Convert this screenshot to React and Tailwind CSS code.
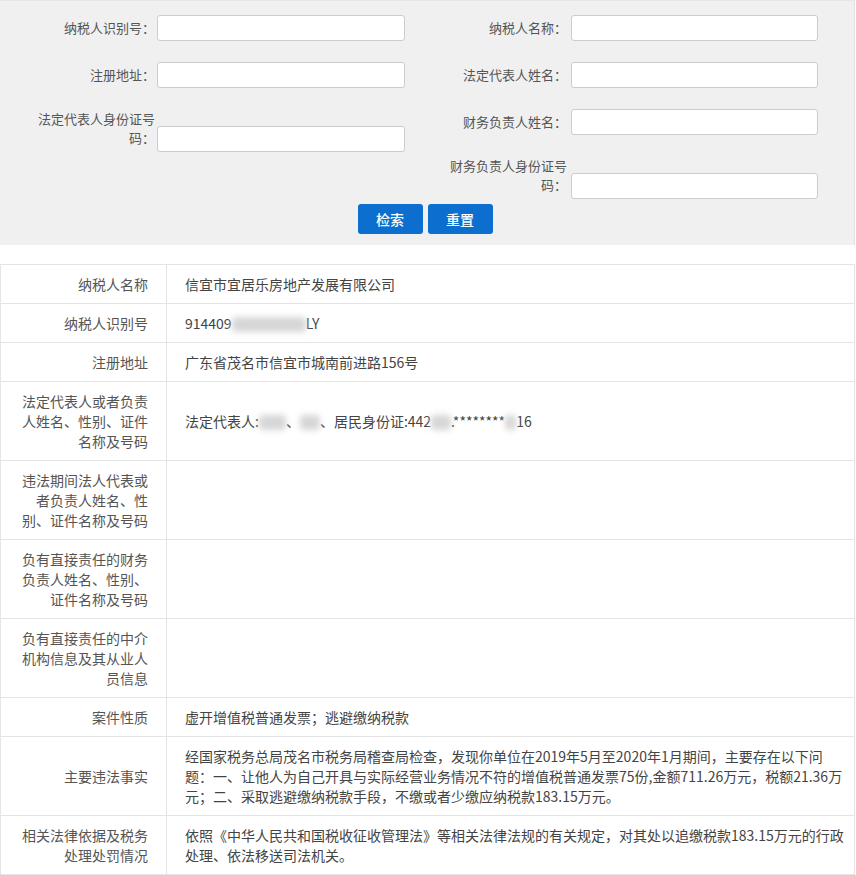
import React from 'react';

const FONT = { fontFamily: '"Noto Sans CJK SC", "Noto Sans", sans-serif' };

const LEFT_FIELDS = [
  { label: '纳税人识别号：' },
  { label: '注册地址：' },
  { label: '法定代表人身份证号码：', wrap: true },
];

const RIGHT_FIELDS = [
  { label: '纳税人名称：' },
  { label: '法定代表人姓名：' },
  { label: '财务负责人姓名：' },
  { label: '财务负责人身份证号码：', wrap: true },
];

function Field({ label, wrap, side }) {
  const labelPos = side === 'left' ? 'ml-[33px]' : 'ml-[17px]';
  const inputPos = side === 'left' ? 'ml-[2px] w-[248px]' : 'ml-[4px] w-[247px]';
  return (
    <div className={wrap ? 'flex items-start' : 'flex items-center h-[26px]'}>
      <label className={`${labelPos} w-[122px] shrink-0 text-right text-[13px] text-[#555] ${wrap ? 'leading-[19px]' : 'leading-[26px]'}`}>
        {label}
      </label>
      <input
        type="text"
        className={`${inputPos} h-[26px] shrink-0 bg-white border border-[#cccccc] rounded-[3px] outline-none ${wrap ? 'mt-[17px]' : ''}`}
      />
    </div>
  );
}

function Blur({ w }) {
  return (
    <span
      className="inline-block align-middle h-[15px] bg-[#d6d6d6] blur-[3px] rounded-sm -mt-[2px]"
      style={{ width: w }}
    />
  );
}

const ROWS = [
  { label: '纳税人名称', value: '信宜市宜居乐房地产发展有限公司' },
  {
    label: '纳税人识别号',
    value: (
      <>
        914409<Blur w={74} />LY
      </>
    ),
  },
  { label: '注册地址', value: '广东省茂名市信宜市城南前进路156号' },
  {
    label: '法定代表人或者负责人姓名、性别、证件名称及号码',
    value: (
      <>
        法定代表人:<Blur w={27} />、<Blur w={20} />、居民身份证:442<Blur w={20} />.********<Blur w={11} />16
      </>
    ),
  },
  { label: '违法期间法人代表或者负责人姓名、性别、证件名称及号码', value: '' },
  { label: '负有直接责任的财务负责人姓名、性别、证件名称及号码', value: '' },
  { label: '负有直接责任的中介机构信息及其从业人员信息', value: '' },
  { label: '案件性质', value: '虚开增值税普通发票；逃避缴纳税款' },
  {
    label: '主要违法事实',
    value: (
      <>
        经国家税务总局茂名市税务局稽查局检查，发现你单位在2019年5月至2020年1月期间，主要存在以下问
        <br />
        题：一、让他人为自己开具与实际经营业务情况不符的增值税普通发票75份,金额711.26万元，税额21.36万
        <br />
        元；二、采取逃避缴纳税款手段，不缴或者少缴应纳税款183.15万元。
      </>
    ),
  },
  {
    label: '相关法律依据及税务处理处罚情况',
    value: (
      <>
        依照《中华人民共和国税收征收管理法》等相关法律法规的有关规定，对其处以追缴税款183.15万元的行政
        <br />
        处理、依法移送司法机关。
      </>
    ),
  },
];

export default function App() {
  return (
    <div className="w-[856px] bg-white" style={FONT}>
      {/* search panel */}
      <div className="bg-[#f0f0f0] border-t border-[#e6e6e6] border-r border-r-[#e2e2e2] w-[855px]">
        <div className="flex pt-[14px]">
          <div className="w-[428px] shrink-0 flex flex-col gap-[21px]">
            {LEFT_FIELDS.map((f) => (
              <Field key={f.label} {...f} side="left" />
            ))}
          </div>
          <div className="flex-1 flex flex-col gap-[21px]">
            {RIGHT_FIELDS.map((f) => (
              <Field key={f.label} {...f} side="right" />
            ))}
          </div>
        </div>
        <div className="flex justify-center gap-[5px] mt-[5px] pb-[11px] pr-[4px]">
          <button className="w-[65px] h-[30px] rounded-[3px] bg-[#0c6fcf] text-white text-[14px] font-medium">检索</button>
          <button className="w-[65px] h-[30px] rounded-[3px] bg-[#0c6fcf] text-white text-[14px] font-medium">重置</button>
        </div>
      </div>

      {/* result table */}
      <table className="mt-[19px] w-[855px] border-collapse text-[14px] leading-[20px]">
        <tbody>
          {ROWS.map((r) => (
            <tr key={r.label}>
              <td className="w-[166px] border border-[#e4e4e4] pl-[18px] pr-[18px] py-[9px] text-right align-middle text-[#555]">
                {r.label}
              </td>
              <td className="border border-[#e4e4e4] pl-[18px] pr-0 py-[9px] align-middle text-[#444] whitespace-nowrap">
                {r.value}
              </td>
            </tr>
          ))}
        </tbody>
      </table>
    </div>
  );
}
